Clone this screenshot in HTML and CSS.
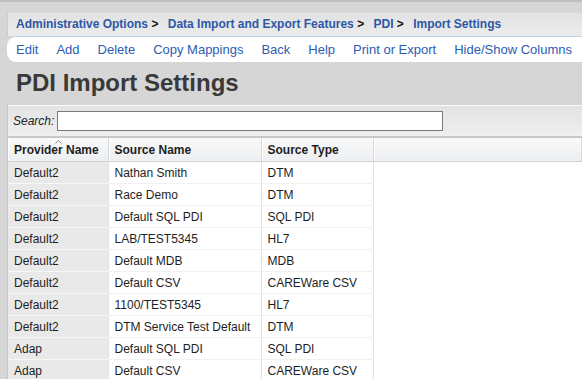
FILE: index.html
```html
<!DOCTYPE html>
<html lang="en">
<head>
    <meta charset="UTF-8">
    <meta name="viewport" content="width=device-width, initial-scale=1.0">
    <title>PDI Import Settings</title>
    <link rel="stylesheet" href="styles.css">
</head>
<body>
    <div id="page">
        <div id="breadcrumb">
            <a href="#">Administrative Options</a> <span class="sep">&gt;</span>
            <a href="#">Data Import and Export Features</a> <span class="sep">&gt;</span>
            <a href="#">PDI</a> <span class="sep">&gt;</span>
            <a href="#">Import Settings</a>
        </div>
        <div id="menu">
            <a href="#">Edit</a>
            <a href="#">Add</a>
            <a href="#">Delete</a>
            <a href="#">Copy Mappings</a>
            <a href="#">Back</a>
            <a href="#">Help</a>
            <a href="#">Print or Export</a>
            <a href="#">Hide/Show Columns</a>
        </div>
        <h1 class="title">PDI Import Settings</h1>
        <div id="grid">
            <div class="toolbar">
                <label>Search:</label>
                <input type="text" class="search">
            </div>
            <table class="data">
                <colgroup>
                    <col class="c1">
                    <col class="c2">
                    <col class="c3">
                    <col>
                </colgroup>
                <thead>
                    <tr>
                        <th class="sorted">Provider Name
                            <svg class="caret" width="7" height="4" viewBox="0 0 7 4"><path d="M0.5 3.5 L3.5 0.5 L6.5 3.5" fill="none" stroke="#8a8a8a" stroke-width="1"/></svg>
                        </th>
                        <th>Source Name</th>
                        <th>Source Type</th>
                        <th></th>
                    </tr>
                </thead>
                <tbody>
                    <tr><td>Default2</td><td>Nathan Smith</td><td>DTM</td><td class="blank"></td></tr>
                    <tr><td>Default2</td><td>Race Demo</td><td>DTM</td><td class="blank"></td></tr>
                    <tr><td>Default2</td><td>Default SQL PDI</td><td>SQL PDI</td><td class="blank"></td></tr>
                    <tr><td>Default2</td><td>LAB/TEST5345</td><td>HL7</td><td class="blank"></td></tr>
                    <tr><td>Default2</td><td>Default MDB</td><td>MDB</td><td class="blank"></td></tr>
                    <tr><td>Default2</td><td>Default CSV</td><td>CAREWare CSV</td><td class="blank"></td></tr>
                    <tr><td>Default2</td><td>1100/TEST5345</td><td>HL7</td><td class="blank"></td></tr>
                    <tr><td>Default2</td><td>DTM Service Test Default</td><td>DTM</td><td class="blank"></td></tr>
                    <tr><td>Adap</td><td>Default SQL PDI</td><td>SQL PDI</td><td class="blank"></td></tr>
                    <tr><td>Adap</td><td>Default CSV</td><td>CAREWare CSV</td><td class="blank"></td></tr>
                </tbody>
            </table>
        </div>
    </div>
</body>
</html>
```
FILE: styles.css
```css
body{
    margin:0;
    font-family: "Liberation Sans", Arial, sans-serif;
    background-color: #d6d6d6;
    overflow: hidden;
}
a{
    text-decoration: none;
}
#page{
    border-top: 2px solid #bfbfbf;
    padding: 10px 0 0 7px;
}
#breadcrumb{
    height: 23px;
    line-height: 23px;
    padding-left: 8px;
    font-size: 12px;
    font-weight: bold;
    white-space: nowrap;
    background: linear-gradient(#e2e2e2, #ececec);
    border-left: 1px solid #cbcbcb;
    border-top: 1px solid #d9d9d9;
}
#breadcrumb a{
    color: #2e57a6;
}
#breadcrumb .sep{
    color: #111;
    margin-right: 6px;
}
#menu{
    display: flex;
    height: 25px;
    align-items: center;
    padding-left: 0;
    background-color: #fff;
    border-top: 1px solid #bcd4ee;
    border-radius: 9px 0 0 9px;
    white-space: nowrap;
}
#menu a{
    font-size: 13px;
    color: #2d5cb3;
    padding: 0 9px;
}
.title{
    margin: 6px 0 0 9px;
    height: 37px;
    line-height: 30px;
    font-size: 24px;
    font-weight: bold;
    color: #393939;
}
#grid{
    border-left: 1px solid #c6c6c6;
}
.toolbar{
    display: flex;
    align-items: center;
    height: 30px;
    padding-left: 5px;
    border-top: 1px solid #fbfbfb;
    border-bottom: 2px solid #c8c8c8;
    background: linear-gradient(#e3e3e3, #efefef);
}
.toolbar label{
    font-size: 12px;
    font-style: italic;
    color: #222;
    margin-right: 3px;
}
.search{
    width: 382px;
    height: 16px;
    padding: 1px;
    margin: 0;
    border: 1px solid #7a7a7a;
    background-color: #fff;
}
.data{
    width: 100%;
    table-layout: fixed;
    border-collapse: collapse;
    font-size: 12px;
    color: #1e1e1e;
}
.c1{ width: 100px; }
.c2{ width: 153px; }
.c3{ width: 112px; }
.data th{
    position: relative;
    height: 23px;
    padding: 0 6px;
    text-align: left;
    font-weight: bold;
    white-space: nowrap;
    background: linear-gradient(#f9f9f9, #eceef1);
    border-bottom: 1px solid #d2d2d2;
    border-right: 1px solid #dadada;
    box-shadow: inset 1px 0 0 #fff;
}
.caret{
    position: absolute;
    left: 47px;
    top: 2px;
}
.data td{
    height: 21px;
    padding: 0 6px;
    white-space: nowrap;
    background-color: #fff;
    border-right: 1px solid #e2e2e2;
    border-bottom: 1px solid #f1f1f1;
}
.data td:first-child{
    background-color: #e9e9e9;
    border-bottom-color: #f7f7f7;
}
.data td.blank{
    border-right: 0;
    border-bottom-color: #fff;
}
```
